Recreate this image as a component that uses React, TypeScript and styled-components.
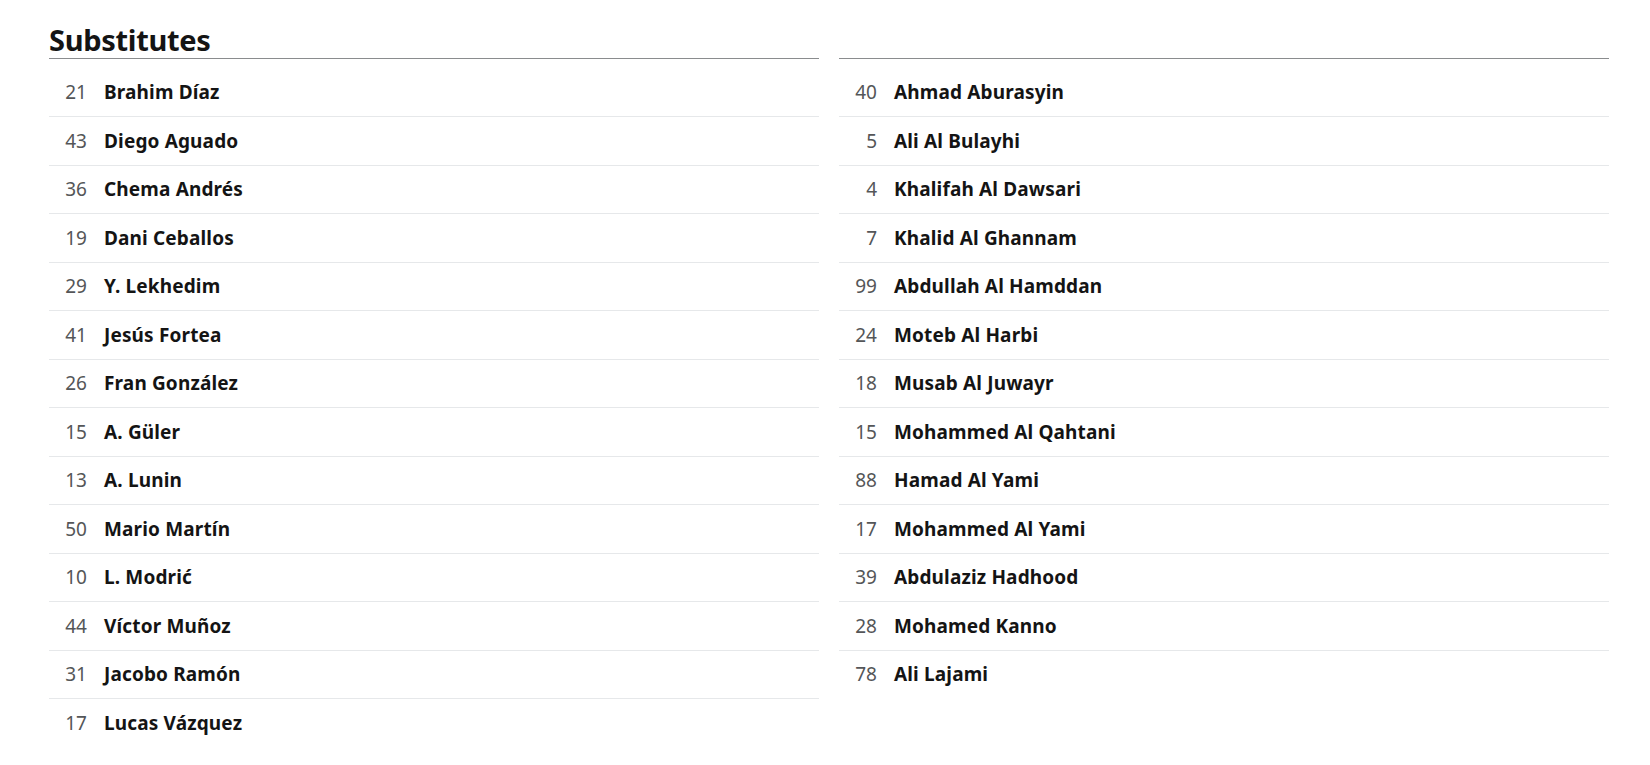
import React from "react";
import styled, { createGlobalStyle } from "styled-components";

const GlobalStyle = createGlobalStyle`
  html, body {
    margin: 0;
    padding: 0;
    background: #ffffff;
  }
  body {
    font-family: "Noto Sans", "Open Sans", Arial, sans-serif;
    color: #141414;
  }
`;

const Page = styled.main`
  padding: 22px 41px 0 49px;
`;

const Heading = styled.h2`
  margin: 0;
  font-size: 29px;
  line-height: 36px;
  font-weight: 700;
  color: #141414;
  letter-spacing: -0.3px;
`;

const Columns = styled.div`
  display: grid;
  grid-template-columns: 1fr 1fr;
  column-gap: 20px;
`;

const Column = styled.section`
  border-top: 1px solid #8a8c8e;
  padding-top: 9.5px;
`;

const List = styled.ul`
  list-style: none;
  margin: 0;
  padding: 0;
`;

const Row = styled.li<{ $last?: boolean }>`
  display: flex;
  align-items: center;
  height: 47.5px;
  border-bottom: 1px solid ${(p) => (p.$last ? "transparent" : "#e6e8ea")};
`;

const Num = styled.span`
  width: 38px;
  flex: none;
  text-align: right;
  font-size: 19px;
  font-weight: 400;
  color: #545658;
`;

const Name = styled.span`
  margin-left: 17px;
  font-size: 19px;
  font-weight: 700;
  letter-spacing: 0.15px;
  color: #141414;
`;

type Player = [string, string];

const left: Player[] = [
  ["21", "Brahim Díaz"],
  ["43", "Diego Aguado"],
  ["36", "Chema Andrés"],
  ["19", "Dani Ceballos"],
  ["29", "Y. Lekhedim"],
  ["41", "Jesús Fortea"],
  ["26", "Fran González"],
  ["15", "A. Güler"],
  ["13", "A. Lunin"],
  ["50", "Mario Martín"],
  ["10", "L. Modrić"],
  ["44", "Víctor Muñoz"],
  ["31", "Jacobo Ramón"],
  ["17", "Lucas Vázquez"],
];

const right: Player[] = [
  ["40", "Ahmad Aburasyin"],
  ["5", "Ali Al Bulayhi"],
  ["4", "Khalifah Al Dawsari"],
  ["7", "Khalid Al Ghannam"],
  ["99", "Abdullah Al Hamddan"],
  ["24", "Moteb Al Harbi"],
  ["18", "Musab Al Juwayr"],
  ["15", "Mohammed Al Qahtani"],
  ["88", "Hamad Al Yami"],
  ["17", "Mohammed Al Yami"],
  ["39", "Abdulaziz Hadhood"],
  ["28", "Mohamed Kanno"],
  ["78", "Ali Lajami"],
];

const PlayerList = ({ players }: { players: Player[] }) => (
  <List>
    {players.map(([n, name], i) => (
      <Row key={name} $last={i === players.length - 1}>
        <Num>{n}</Num>
        <Name>{name}</Name>
      </Row>
    ))}
  </List>
);

export default function App() {
  return (
    <Page>
      <GlobalStyle />
      <Heading>Substitutes</Heading>
      <Columns>
        <Column>
          <PlayerList players={left} />
        </Column>
        <Column>
          <PlayerList players={right} />
        </Column>
      </Columns>
    </Page>
  );
}
